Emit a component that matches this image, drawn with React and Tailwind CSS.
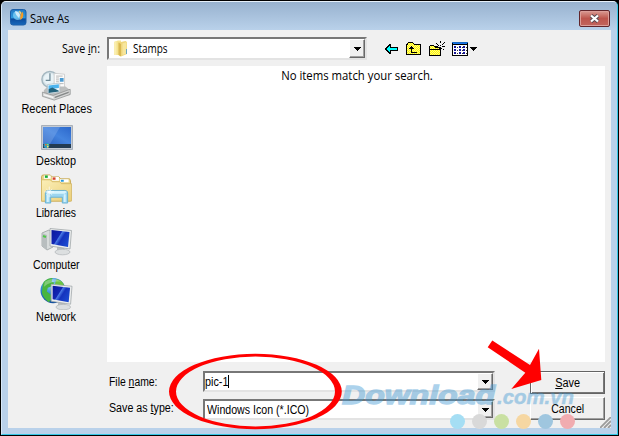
import React from "react";

function AppIcon() {
  return (
    <svg width="17" height="17" viewBox="0 0 17 17">
      <defs>
        <linearGradient id="app" x1="0" y1="0" x2="0" y2="1">
          <stop offset="0" stopColor="#2379c4" />
          <stop offset="0.55" stopColor="#2d9be0" />
          <stop offset="0.6" stopColor="#0b4b9c" />
          <stop offset="1" stopColor="#1668bc" />
        </linearGradient>
      </defs>
      <rect x="0.5" y="0.5" width="15.5" height="15.5" rx="2.5" fill="url(#app)" stroke="#1c5fa8" />
      <path d="M4 3c-2 3-1 7 3 8 3 0 5-1 6-3L10 6 9 2z" fill="#7fd0f6" opacity="0.75" />
      <path d="M5 2c2 0 4 1 5 4l-1 3C7 7 5 5 5 2z" fill="#e8f8ff" opacity="0.8" />
      <path d="M9 1.500l2 1.500-.5 3L9.500 4z" fill="#ffd777" />
      <path d="M12 2.500c2 2 2 6-1.500 8.500C9.500 8 11 5 12 2.500z" fill="#f59a23" />
    </svg>
  );
}

function FolderIcon() {
  return (
    <svg width="14" height="17" viewBox="0 0 14 17">
      <path d="M0 2l4-1.500h3V15H0z" fill="#f5e38f" />
      <path d="M0 2l2.500-1V15H0z" fill="#faeeb0" />
      <path d="M4.500 2.500L11.500 1 13 2v12l-6 2.500-2.500-1.500z" fill="#efd67c" />
      <path d="M4.500 2.500L7 4v12.500L4.500 15z" fill="#d9b851" />
      <path d="M8.500 3.500l4-1.500v11.500l-4 1.500z" fill="#f7e69c" />
      <path d="M12.500 9v5" stroke="#6aa5bf" strokeWidth="1" />
    </svg>
  );
}

function RecentIcon() {
  return (
    <svg width="32" height="31" viewBox="0 0 34 32">
      <circle cx="9.500" cy="9.500" r="8.500" fill="#d9e5ea" stroke="#a4b7c0" strokeWidth="1.600" />
      <circle cx="9" cy="9" r="6" fill="#e9f3f7" />
      <path d="M9.500 3v7.500H5" fill="none" stroke="#6c8795" strokeWidth="1.300" />
      <path d="M14 3l11 1v16l-11-1z" fill="#fbfbfb" stroke="#c6c6c6" strokeWidth="0.8" />
      <path d="M16 6h7M16 8h3M16 10h3M16 12h3M20 14h4" stroke="#b5b5b5" />
      <path d="M20 8h4v4h-4z" fill="#4b9bd2" />
      <path d="M3 21l4-4h19l5 4v5l-18 3L3 25z" fill="#bcbebe" />
      <path d="M7 15l13-1.500v9.500L7 25z" fill="#f4fafc" stroke="#a9bac4" strokeWidth="0.7" />
      <path d="M8 16l11-1.300v4L8 20z" fill="#4db4ee" />
      <path d="M8 20l4-2 7 3.500v1L8 24z" fill="#23637d" />
      <path d="M1.500 23L13 26.500 31 20v5.500L14 31.500l-12.500-4z" fill="#d5d6d6" stroke="#8f9292" strokeWidth="0.8" />
      <path d="M3 25l10 3v1.500l-10-3z" fill="#f5f5f5" />
      <path d="M14.500 28l15-5.500V24l-15 5.500z" fill="#858888" />
    </svg>
  );
}

function DesktopIcon() {
  return (
    <svg width="32" height="25" viewBox="0 0 32 25">
      <defs>
        <linearGradient id="desk" x1="0" y1="1" x2="1" y2="0">
          <stop offset="0" stopColor="#2a5fbe" />
          <stop offset="0.5" stopColor="#4484df" />
          <stop offset="1" stopColor="#2b67cb" />
        </linearGradient>
      </defs>
      <path d="M.5.5h31v24H.5z" fill="#c4cbd4" stroke="#a9b0b9" />
      <path d="M2 2h28v17H2z" fill="url(#desk)" />
      <path d="M2 2h17L9 19H2z" fill="#8bb4ee" opacity="0.35" />
      <path d="M2 19h28v4H2z" fill="#233b52" />
      <circle cx="5.500" cy="20.500" r="2.800" fill="#2e9abe" />
      <path d="M4 19h1.500v1.500H4z" fill="#ee6c37" />
      <path d="M6 19h1.500v1.500H6z" fill="#8edc65" />
      <path d="M6 21h1.500v1.500H6z" fill="#ffe05b" />
    </svg>
  );
}

function LibrariesIcon() {
  return (
    <svg width="33" height="30" viewBox="0 0 33 31">
      <defs>
        <linearGradient id="lib" x1="0" y1="0" x2="1" y2="1">
          <stop offset="0" stopColor="#fbefb8" />
          <stop offset="1" stopColor="#ebcf78" />
        </linearGradient>
      </defs>
      <path d="M1 28V3q0-2 2-2h7l2 2h7l2 2h9l1 2v21z" fill="#ead485" stroke="#c9ac5a" />
      <path d="M3.500 1.500h7V5h-7z M12 3h7v4h-7z M20 5.500h9v3h-9z" fill="#fff" />
      <path d="M4.500 1.500h3v2.500h-3z" fill="#16ae34" />
      <path d="M12.500 3.500h3V6h-3z" fill="#d4422b" />
      <path d="M21 6h3v2h-3z" fill="#2598dc" />
      <path d="M1 6h9l2 2h8l1.500 2H32v18H1z" fill="url(#lib)" stroke="#d3b563" strokeWidth="0.8" />
      <path d="M5 30V19.500q0-2.500 3-2.500h17q3 0 3 2.500V30h-5.500v-6h-12v6z" fill="#9cd5ef" stroke="#5fadd2" strokeWidth="0.9" />
      <path d="M6 18.500q0-1 2-1h17q2 0 2 1l-2 2H8z" fill="#d6f4fe" />
      <path d="M6.500 21h2v8h-2zM24 21h2v8h-2z" fill="#d5f2fc" />
      <path d="M9 13v11M4 18.500h10M6 15.500l6 6m0-6l-6 6" stroke="#fff" strokeWidth="0.7" />
    </svg>
  );
}

function Monitor({ id }) {
  return (
    <g>
      <defs>
        <linearGradient id={id} x1="0" y1="0" x2="1" y2="0.6">
          <stop offset="0" stopColor="#0a179c" />
          <stop offset="0.45" stopColor="#1226b4" />
          <stop offset="0.5" stopColor="#4a7ae6" />
          <stop offset="0.65" stopColor="#1533bd" />
          <stop offset="1" stopColor="#1a48cf" />
        </linearGradient>
      </defs>
      <path d="M8 18l7 1 1 4h-8z" fill="#b8bdbf" />
      <ellipse cx="13.500" cy="24" rx="7.500" ry="2.800" fill="#dcdfe0" stroke="#b0b5b7" strokeWidth="0.7" />
      <path d="M1 0.500L22.500 2.500 21 21 1 18z" fill="#eceeee" stroke="#a1a7a9" strokeWidth="0.8" />
      <path d="M2.500 2l18 2L19 19 2.500 16z" fill={"url(#" + id + ")"} />
    </g>
  );
}

function ComputerIcon() {
  return (
    <svg width="32" height="29" viewBox="0 0 32 29">
      <path d="M1 6l7-3 4 3v14l-6 3-5-4z" fill="#d8dcdc" stroke="#989e9f" strokeWidth="0.8" />
      <path d="M1 6l5 2v15l-5-4z" fill="#b8bebf" />
      <path d="M2 9l3 1" stroke="#4fc749" strokeWidth="2" />
      <g transform="translate(8 1)"><Monitor id="pc" /></g>
    </svg>
  );
}

function NetworkIcon() {
  return (
    <svg width="33" height="33" viewBox="0 0 34 34">
      <defs>
        <radialGradient id="globe" cx="0.4" cy="0.25" r="0.75">
          <stop offset="0" stopColor="#a1dcf8" />
          <stop offset="0.5" stopColor="#2f8bd5" />
          <stop offset="1" stopColor="#114d9b" />
        </radialGradient>
      </defs>
      <circle cx="13.500" cy="14" r="13" fill="url(#globe)" />
      <path d="M4 5c3-3 6-4 9-4l-1 4 3 1-4 4-3 1-1 4 4 3 1 5-3 3c-4-3-7-7-7-11 1-3 0-7 2-10z" fill="#48b53e" />
      <path d="M17 2c4 1 7 3 8 7l-3 2-4-2-3 1 1-5z" fill="#6cc542" />
      <path d="M5 5c5-4 12-4 17 0-5-1-12 0-18 5z" fill="#fff" opacity="0.3" />
      <g transform="translate(10.500 7)"><Monitor id="net" /></g>
    </svg>
  );
}

const places = [
  { label: "Recent Places", Icon: RecentIcon, text: "scale-x-[0.91]" },
  { label: "Desktop", Icon: DesktopIcon, text: "scale-x-[0.905]" },
  { label: "Libraries", Icon: LibrariesIcon, text: "scale-x-[0.87]" },
  { label: "Computer", Icon: ComputerIcon, text: "scale-x-[0.885]" },
  { label: "Network", Icon: NetworkIcon, text: "scale-x-[0.905]" },
];

function ToolbarIcons() {
  return (
    <svg width="94" height="16" viewBox="0 0 94 16" shapeRendering="crispEdges">
      <defs>
        <pattern id="dither" width="2" height="2" patternUnits="userSpaceOnUse">
          <path d="M0 0h2v2H0z" fill="#ff0" />
          <path d="M0 0h1v1H0zM1 1h1v1H1z" fill="#fff38a" />
        </pattern>
      </defs>
      <path d="M0 7h1V6h1V5h1V4h1V3h2v3h7v4H6v3H4v-1H3v-1H2v-1H1V9H0z" fill="#000" />
      <path d="M2 7h1V6h1V5h1v2h7v2H5v2H4v-1H3V9H2z" fill="#0ff" />
      <path d="M22 3V2h1V1h5v1h1v1h7v11H21V3z" fill="#000" />
      <path d="M23 2h5v1h1v1h6v9H22V4h1z" fill="url(#dither)" />
      <path d="M26 5h1v1h1v1h1v1h-2v3h5v1h-6V8h-2V7h1V6h1z" fill="#000" />
      <path d="M45 5V4h4v1h1v1h6v9H44V5z" fill="#000" />
      <path d="M45 5h4v1h1v1h4v1h-9zM45 9h10v5H45z" fill="url(#dither)" />
      <path d="M55 0h1v2h-1zM51 2h1v1h-1zM52 3h1v1h-1zM53 4h1v1h-1zM59 1h1v1h-1zM58 2h1v1h-1zM57 3h1v1h-1zM50 5h3v1h-3zM57 5h3v1h-3zM56 7h1v1h-1zM58 8h1v1h-1zM55 4h1v1h-1z" fill="#000" />
      <path d="M67 1h16v14H67z" fill="#000" />
      <path d="M68 4h14v10H68z" fill="#fff" />
      <path d="M68 2h14v1H68z" fill="#1a76ed" />
      <path d="M67 1h16v1H67z" fill="#1769c5" />
      <path d="M69 5h2v2h-2zM74 5h2v2h-2zM78 5h2v2h-2zM69 8h2v2h-2zM74 8h2v2h-2zM78 8h2v2h-2zM69 11h2v2h-2zM74 11h2v2h-2zM78 11h2v2h-2z" fill="#151598" />
      <path d="M72 6h1v1h-1zM77 6h1v1h-1zM81 6h1v1h-1zM72 9h1v1h-1zM77 9h1v1h-1zM81 9h1v1h-1zM72 12h1v1h-1zM77 12h1v1h-1zM81 12h1v1h-1z" fill="#333" />
      <path d="M85 6h7v1h-1v1h-1v1h-1v1h-1V9h-1V8h-1V7h-1z" fill="#000" />
    </svg>
  );
}

function DropButton() {
  return (
    <div className="flex h-full w-4 shrink-0 items-center justify-center border border-t-white border-l-white border-r-[#696969] border-b-[#696969] bg-[#f0f0f0] shadow-[inset_-1px_-1px_0_#a0a0a0]">
      <svg width="7" height="4" viewBox="0 0 7 4" shapeRendering="crispEdges">
        <path d="M0 0h7v1H6v1H5v1H4v1H3V3H2V2H1V1H0z" fill="#000" />
      </svg>
    </div>
  );
}

const sunken = "flex items-center border-2 border-t-[#777] border-l-[#777] border-r-[#e3e3e3] border-b-[#e3e3e3] bg-white";

function Overlay() {
  return (
    <svg className="pointer-events-none absolute inset-0" width="619" height="436" viewBox="0 0 619 436">
      <g fontFamily="Liberation Sans, sans-serif" fontWeight="bold" fontStyle="italic" fill="#3c96d2" stroke="#3c96d2" opacity="0.42">
        <text x="342" y="404" fontSize="25.500" textLength="153" lengthAdjust="spacingAndGlyphs" strokeWidth="1.300">Download</text>
        <text x="497" y="403.500" fontSize="20" textLength="77" lengthAdjust="spacingAndGlyphs" strokeWidth="0.500">.com.vn</text>
      </g>
      <circle cx="457.500" cy="421.500" r="7.500" fill="#a5def4" />
      <circle cx="479.500" cy="421.500" r="7.500" fill="#d9d9d9" />
      <circle cx="501.500" cy="421.500" r="7.500" fill="#c9e0a2" />
      <circle cx="523.500" cy="421.500" r="7.500" fill="#f6d7a2" />
      <circle cx="545.500" cy="421.500" r="7.500" fill="#9fc6df" />
      <circle cx="567.500" cy="421.500" r="7.500" fill="#f1acb0" />
      <path fillRule="evenodd" fill="#f00" d="M169 391.500a86.400 37.700 0 1 1 172.800 0a86.400 37.700 0 1 1-172.800 0zM176 391.500a79.500 34.900 0 1 0 159 0a79.500 34.900 0 1 0-159 0z" />
      <path fill="#f00" d="M487.700 347.300L492.300 340.500 530 365 539 348.700 541.300 380 511.300 388.900 525.300 372.700z" />
    </svg>
  );
}

export default function App() {
  return (
    <div className="relative flex h-[436px] w-[619px] flex-col overflow-hidden bg-black p-px font-['Liberation_Sans',Arial,sans-serif] text-xs text-black">
      <div className="flex h-[434px] flex-col rounded-t-[5px] border-t border-r border-b border-l border-t-[#e6f0fa] border-r-[#35c7e6] border-b-[#35c7e6] border-l-[#d8e8f8] bg-[#b9d1ea] pr-[6px] pb-[6px] pl-[6px]">
        <header className="-mx-[6px] flex h-7 shrink-0 items-start rounded-t-[4px] bg-linear-to-b from-[#98b2cf] to-[#b9d1ea] pr-[7px] pl-2">
          <div className="mt-[7px]"><AppIcon /></div>
          <h1 className="mt-[9px] ml-[3px] origin-left scale-x-[0.93] font-['Open_Sans',sans-serif] text-xs leading-4">Save As</h1>
          <div className="mt-[8px] ml-auto flex h-[17px] w-[31px] items-center justify-center rounded-[2px] border border-[#61252b] bg-linear-to-b from-[#d99b94] via-[#bd554d] to-[#c1655e] shadow-[inset_0_0_0_1px_#dc9e99]">
            <svg width="11" height="9" viewBox="0 0 11 9">
              <path d="M2 1.500l7 6M9 1.500l-7 6" stroke="#554a53" strokeWidth="4" />
              <path d="M2 1.500l7 6M9 1.500l-7 6" stroke="#fff" strokeWidth="2.300" />
            </svg>
          </div>
        </header>
        <main className="flex min-h-0 w-[603px] flex-1 bg-[#f0f0f0]">
          <nav className="flex w-[97px] shrink-0 flex-col items-center pt-[38px]">
            {places.map(({ label, Icon, text }) => (
              <div key={label} className="flex h-[52px] flex-col items-center">
                <div className="flex h-[34px] shrink-0 items-center justify-center"><Icon /></div>
                <span className={"block leading-[14px] whitespace-nowrap " + text}>{label}</span>
              </div>
            ))}
          </nav>
          <section className="flex w-[506px] flex-col pt-[7px]">
            <div className="flex h-[23px] shrink-0 items-center">
              <div className="-ml-[43px] w-[45px] origin-left scale-x-[0.89] font-['Open_Sans',sans-serif] text-xs whitespace-nowrap">Save <u>i</u>n:</div>
              <div className={sunken + " h-[23px] w-[260px]"}>
                <div className="ml-[5px]"><FolderIcon /></div>
                <span className="ml-[5px] origin-left scale-x-[0.83] font-['Open_Sans',sans-serif] text-xs">Stamps</span>
                <div className="ml-auto h-full"><DropButton /></div>
              </div>
              <div className="ml-[18px]"><ToolbarIcons /></div>
            </div>
            <div className="mt-[6px] ml-[2px] h-[296px] w-[498px] shrink-0 bg-white pt-px pl-[2px] text-center font-['Open_Sans',sans-serif] text-xs leading-[18px]">
              <p className="scale-x-[0.945]">No items match your search.</p>
            </div>
            <div className="mt-[9px] ml-[4px] flex h-[57px]">
              <div className="flex w-[94px] flex-col gap-[6px]">
                <span className="h-5 origin-left scale-x-[0.865] leading-[23px]">File <u>n</u>ame:</span>
                <span className="h-5 origin-left scale-x-[0.89] leading-[23px] whitespace-nowrap">Save as <u>t</u>ype:</span>
              </div>
              <div className="flex w-[292px] flex-col gap-[7px]">
                <div className={sunken + " h-[21px]"}>
                  <span className="-mr-[3px] origin-left scale-x-[0.9] pt-px leading-[17px]">pic-1</span>
                  <span className="h-[13px] w-px bg-black" />
                  <div className="ml-auto h-full"><DropButton /></div>
                </div>
                <div className={sunken + " h-[21px]"}>
                  <span className="ml-[2px] origin-left scale-x-[0.885] pt-px leading-[17px]">Windows Icon (*.ICO)</span>
                  <div className="ml-auto h-full"><DropButton /></div>
                </div>
              </div>
              <div className="ml-[35px] flex w-[75px] flex-col gap-[3px]">
                <button className="h-[23px] border border-[#646464] bg-[#f0f0f0] shadow-[inset_1px_1px_0_#fff,inset_-1px_-1px_0_#777]"><span className="inline-block scale-x-[0.91]"><u>S</u>ave</span></button>
                <button className="h-[23px] border border-t-white border-l-white border-r-[#696969] border-b-[#696969] bg-[#f0f0f0] shadow-[inset_-1px_-1px_0_#a0a0a0]"><span className="inline-block scale-x-[0.88]">Cancel</span></button>
              </div>
              <svg className="mt-[46px] -mr-2 -ml-[5px]" width="11" height="11" viewBox="0 0 11 11">
                <path d="M0 11L11 0M4 11l7-7M8 11l3-3" stroke="#9b9b9b" strokeWidth="1.800" />
              </svg>
            </div>
          </section>
        </main>
      </div>
      <Overlay />
    </div>
  );
}
